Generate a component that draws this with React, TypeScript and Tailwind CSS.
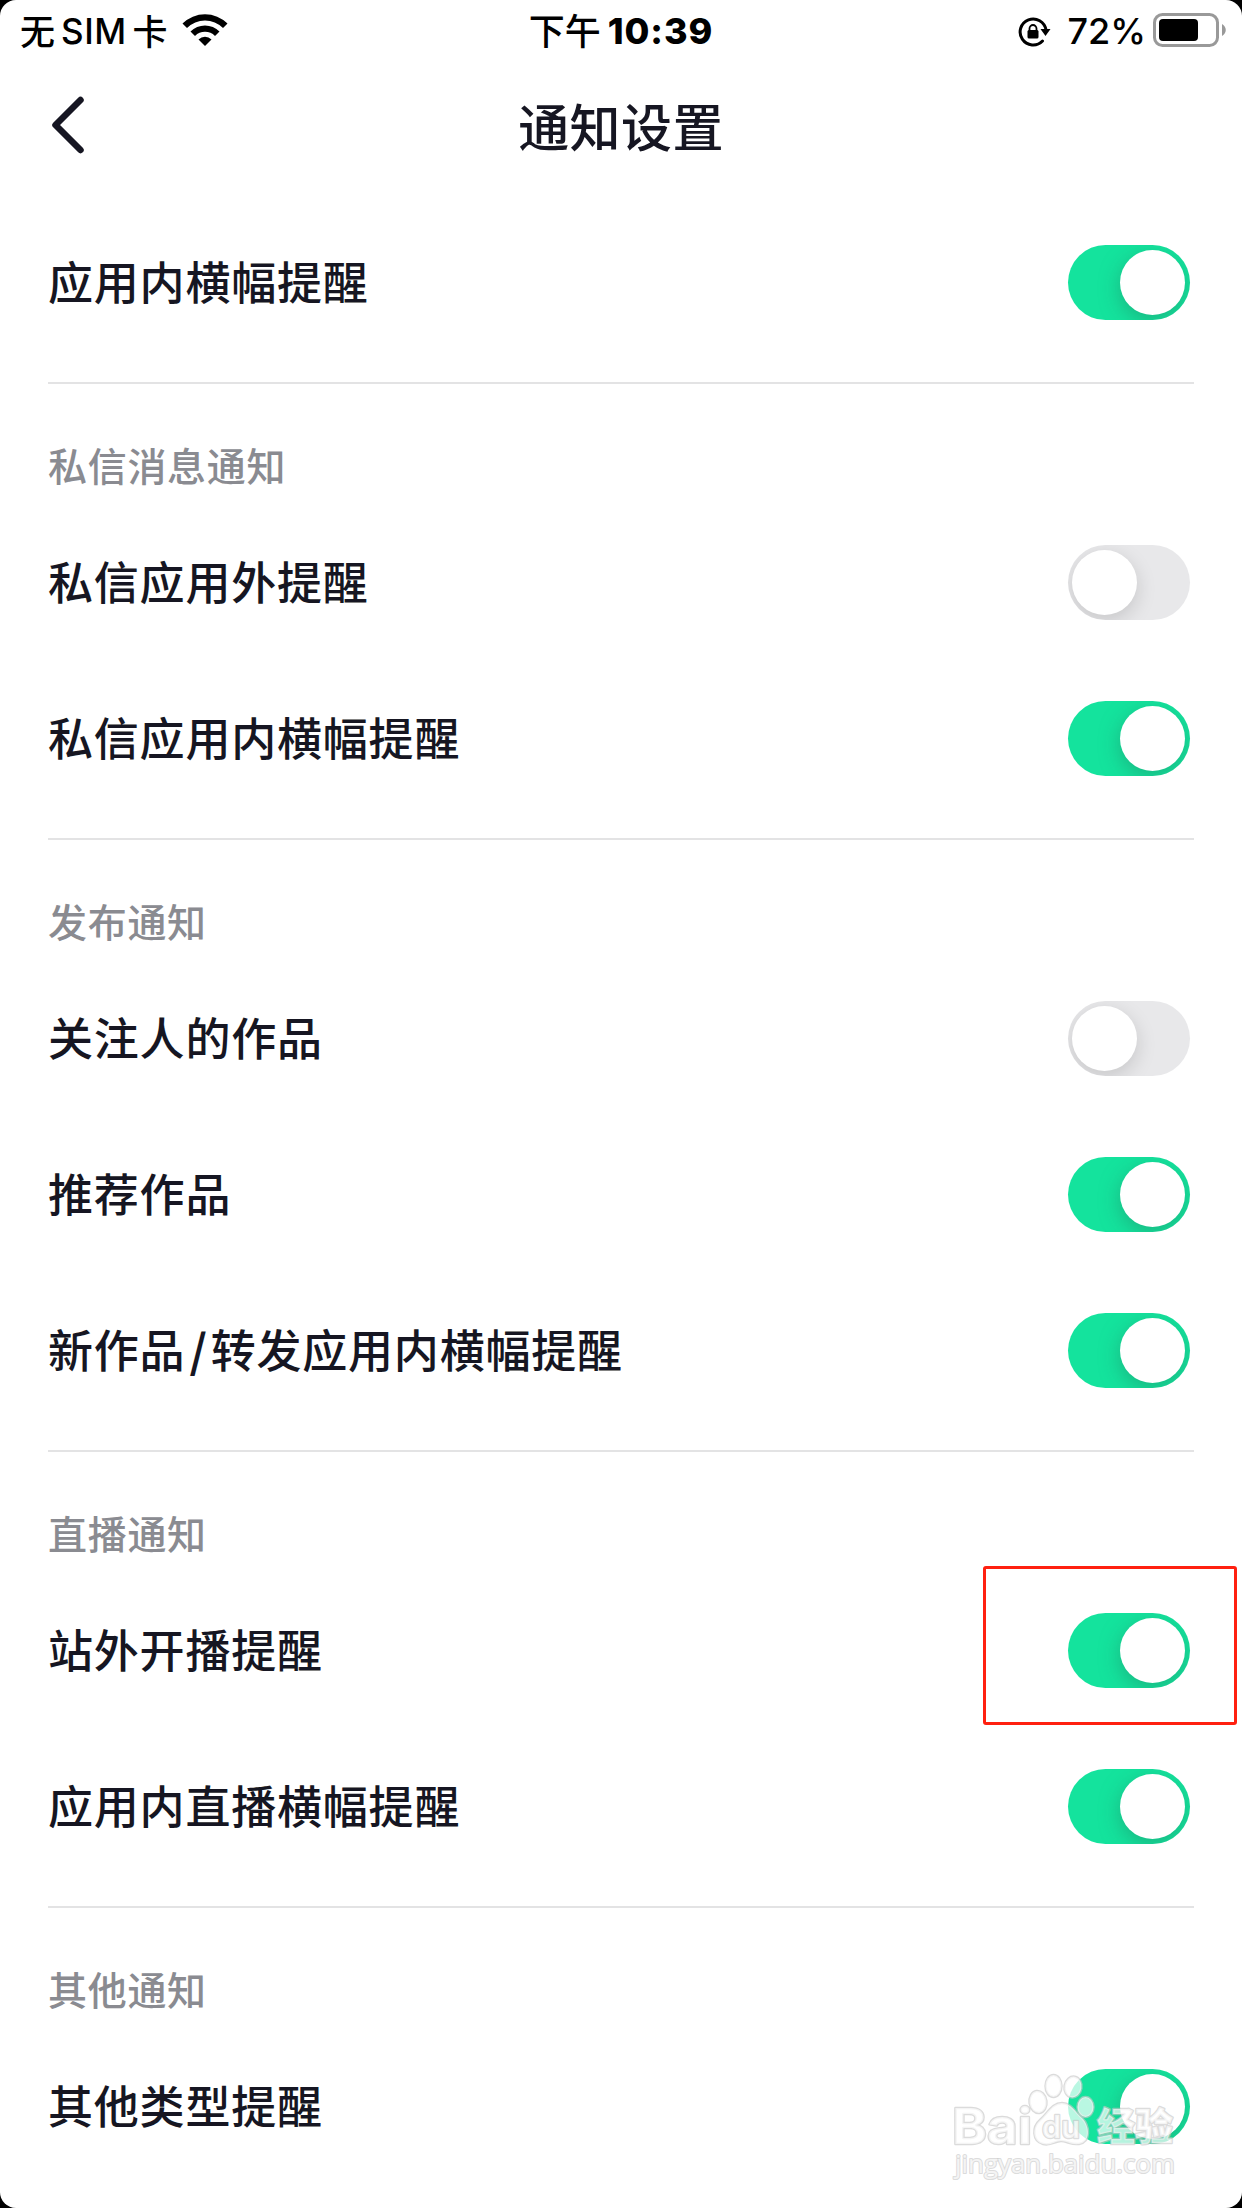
import { useState } from 'react';

interface SettingItem {
    id: string;
    label: string;
    enabled: boolean;
    highlighted?: boolean;
}

interface SettingGroup {
    title?: string;
    items: SettingItem[];
}

const GROUPS: SettingGroup[] = [
    {
        items: [{ id: 'in-app-banner', label: '应用内横幅提醒', enabled: true }],
    },
    {
        title: '私信消息通知',
        items: [
            { id: 'dm-push', label: '私信应用外提醒', enabled: false },
            { id: 'dm-banner', label: '私信应用内横幅提醒', enabled: true },
        ],
    },
    {
        title: '发布通知',
        items: [
            { id: 'following-posts', label: '关注人的作品', enabled: false },
            { id: 'recommended-posts', label: '推荐作品', enabled: true },
            { id: 'posts-banner', label: '新作品/转发应用内横幅提醒', enabled: true },
        ],
    },
    {
        title: '直播通知',
        items: [
            { id: 'live-push', label: '站外开播提醒', enabled: true, highlighted: true },
            { id: 'live-banner', label: '应用内直播横幅提醒', enabled: true },
        ],
    },
    {
        title: '其他通知',
        items: [{ id: 'other', label: '其他类型提醒', enabled: true }],
    },
];

export default function App() {
    const [values, setValues] = useState<Record<string, boolean>>(() =>
        Object.fromEntries(GROUPS.flatMap(group => group.items).map(item => [item.id, item.enabled]))
    );

    const toggle = (id: string) => setValues(prev => ({ ...prev, [id]: !prev[id] }));

    return (
        <div className="h-[2208px] w-[1242px] bg-black font-['Noto_Sans_CJK_SC',sans-serif]">
            <div className="relative flex h-full flex-col overflow-hidden rounded-[16px] bg-white">
                <StatusBar />

                <header className="grid h-[140px] grid-cols-[1fr_auto_1fr] items-center px-[48px] pb-[18px]">
                    <button aria-label="返回" className="justify-self-start">
                        <svg width="40" height="60" viewBox="0 0 40 60" fill="none" className="block">
                            <path
                                d="M32.5 5 L7.5 30 L32.5 55"
                                stroke="#161622"
                                strokeWidth="6.5"
                                strokeLinecap="round"
                                strokeLinejoin="round"
                            />
                        </svg>
                    </button>
                    <h1 className="text-[51px] leading-none font-medium tracking-[0.4px] text-[#161622]">通知设置</h1>
                </header>

                <main className="px-[48px]">
                    {GROUPS.map((group, index) => (
                        <section key={group.title ?? index} className={index > 0 ? 'border-t-2 border-[#e3e3e4]' : ''}>
                            {group.title && (
                                <h2 className="flex h-[120px] items-center pt-[41px] text-[39px] leading-none font-medium tracking-[0.7px] text-[#8a8b91]">
                                    {group.title}
                                </h2>
                            )}
                            <ul className="pb-[22px]">
                                {group.items.map(item => (
                                    <li key={item.id} className="flex h-[156px] items-center justify-between pt-px pr-[4px]">
                                        <span className="pb-[5px] text-[45px] leading-none font-medium tracking-[0.8px] text-[#161622]">
                                            <Label text={item.label} />
                                        </span>
                                        <div className="relative">
                                            <Switch
                                                label={item.label}
                                                checked={values[item.id]}
                                                onChange={() => toggle(item.id)}
                                            />
                                            {item.highlighted && (
                                                <div className="pointer-events-none absolute -top-[47px] -left-[85px] h-[159px] w-[254px] rounded-[3px] border-3 border-[#ff2010]" />
                                            )}
                                        </div>
                                    </li>
                                ))}
                            </ul>
                        </section>
                    ))}
                </main>

                <Watermark />
            </div>
        </div>
    );
}

// Slashes get a little air between the CJK characters
function Label({ text }: { text: string }) {
    const [head, ...rest] = text.split('/');

    return (
        <>
            {head}
            {rest.map(part => (
                <span key={part}>
                    <span className="pr-[3px] pl-[4px] font-bold">/</span>
                    {part}
                </span>
            ))}
        </>
    );
}

function StatusBar() {
    return (
        <div className="grid h-[64px] grid-cols-3 items-center pr-[15px] pb-px pl-[20px] text-[35px] leading-none font-medium text-black">
            <div className="flex items-center">
                <span className="pb-[5px]">无</span>
                <span className="ml-[6px] pb-px font-['Inter'] tracking-[0.5px]">SIM</span>
                <span className="ml-[6px] pb-[5px]">卡</span>
                <svg width="46" height="34" viewBox="0 0 46 34" className="mb-[3px] ml-[14px] block">
                    <path d="M0.5 10.5 A32 32 0 0 1 45.5 10.5 L41 15 A25.5 25.5 0 0 0 5 15 Z" />
                    <path d="M8.5 18.5 A20.5 20.5 0 0 1 37.5 18.5 L33 23 A14 14 0 0 0 13 23 Z" />
                    <path d="M16.5 26.5 A9.2 9.2 0 0 1 29.5 26.5 L23 33 Z" />
                </svg>
            </div>
            <div className="flex items-center justify-center pr-[5px]">
                <span className="pb-[5px] text-[36px]">下午</span>
                <span className="ml-[7px] pb-px font-['Inter'] text-[36px] font-extrabold tracking-[0.9px]">10:39</span>
            </div>
            <div className="flex items-center justify-end">
                <svg width="34" height="30" viewBox="0 0 34 30" fill="none" className="block">
                    <path
                        d="M24.5 24 A13 13 0 1 1 28 13"
                        stroke="black"
                        strokeWidth="3"
                        strokeLinecap="round"
                    />
                    <path d="M22.5 12 H32.5 L27.5 19 Z" fill="black" />
                    <rect x="9.5" y="13" width="11" height="8.5" rx="1.5" fill="black" />
                    <path d="M11.5 14 V11.5 A3.5 3.5 0 0 1 18.5 11.5 V14" stroke="black" strokeWidth="1.8" />
                </svg>
                <span className="ml-[15px] pb-px font-['Inter'] text-[36px]">72%</span>
                <svg width="74" height="34" viewBox="0 0 74 34" fill="none" className="mb-[3px] ml-[7px] block">
                    <rect x="1.5" y="1.5" width="63" height="31" rx="8" stroke="#999" strokeWidth="3" />
                    <rect x="6" y="6" width="39" height="22" rx="4" fill="black" />
                    <path d="M69 11 C74 14 74 20 69 23 Z" fill="#999" />
                </svg>
            </div>
        </div>
    );
}

function Switch({ label, checked, onChange }: { label: string; checked: boolean; onChange: () => void }) {
    return (
        <button
            role="switch"
            aria-checked={checked}
            aria-label={label}
            onClick={onChange}
            className={`flex h-[75px] w-[122px] items-center overflow-hidden rounded-full pr-[5px] pl-[4px] ${
                checked ? 'justify-end bg-[#14e39d]' : 'justify-start bg-[#e8e8ea]'
            }`}
        >
            <span
                className={`size-[65px] rounded-full bg-white ${
                    checked
                        ? 'shadow-[0_6px_20px_rgba(30,150,110,0.6)]'
                        : 'shadow-[0_6px_20px_rgba(0,0,0,0.15)]'
                }`}
            />
        </button>
    );
}

// Translucent logo stamped over the bottom right corner
function Watermark() {
    return (
        <svg
            width="240"
            height="136"
            viewBox="0 0 240 136"
            className="pointer-events-none absolute right-[57px] bottom-[13px]"
            fill="#fff"
            fillOpacity="0.7"
            stroke="#c8c8c8"
            strokeOpacity="0.65"
            strokeWidth="2.5"
            strokeLinejoin="round"
            paintOrder="stroke"
        >
            <ellipse cx="93" cy="43" rx="8.5" ry="11" transform="rotate(-8 93 43)" />
            <ellipse cx="108.5" cy="27" rx="8" ry="11" />
            <ellipse cx="128" cy="28" rx="8.5" ry="10.5" transform="rotate(10 128 28)" />
            <ellipse cx="140.5" cy="48" rx="8" ry="10" />
            <path d="M117 44 C126 44 130 53 137 59 C145 67 146 83 134 85 C126 86 122 82 116 82 C110 82 106 87 98 85 C87 82 87 68 95 61 C103 54 107 44 117 44 Z" />
            <text x="7" y="84.5" fontFamily="Inter, sans-serif" fontSize="50" fontWeight="700" textLength="80" lengthAdjust="spacingAndGlyphs">
                Bai
            </text>
            <text x="97" y="79" fontFamily="Inter, sans-serif" fontSize="31" fontWeight="600" textLength="38" lengthAdjust="spacingAndGlyphs">
                du
            </text>
            <text x="152" y="81" fontFamily="Noto Sans CJK SC, sans-serif" fontSize="38" fontWeight="900" textLength="76" lengthAdjust="spacingAndGlyphs">
                经验
            </text>
            <text x="10" y="114" fontFamily="Open Sans, sans-serif" fontSize="26" fontWeight="400" textLength="220" lengthAdjust="spacingAndGlyphs" strokeWidth="2">
                jingyan.baidu.com
            </text>
        </svg>
    );
}
